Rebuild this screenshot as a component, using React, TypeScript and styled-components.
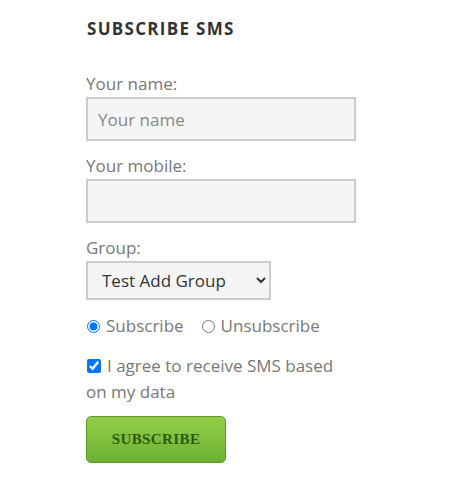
import styled, { createGlobalStyle } from "styled-components"

const GlobalStyle = createGlobalStyle`
  body {
    margin: 0;
    background: #ffffff;
    font-family: "Open Sans", "Liberation Sans", sans-serif;
  }
`

const Widget = styled.form`
  width: 450px;
  box-sizing: border-box;
  padding: 17px 0 0 86px;
  display: flex;
  flex-direction: column;
  align-items: flex-start;
`

const Title = styled.h3`
  margin: 0 0 30px 1px;
  font-family: "Open Sans", "Liberation Sans", sans-serif;
  font-weight: 700;
  font-size: 17px;
  line-height: 24px;
  letter-spacing: 1.3px;
  color: #333333;
`

const Label = styled.label<{ $gap?: number }>`
  display: block;
  margin-top: ${({ $gap }) => $gap ?? 0}px;
  font-size: 17px;
  line-height: 26px;
  color: #777777;
`

const TextInput = styled.input`
  width: 270px;
  height: 44px;
  box-sizing: border-box;
  border: 2px solid #cccccc;
  background: #f5f5f5;
  padding: 0 10px;
  font-family: inherit;
  font-size: 17px;
  color: #555555;
  outline: none;

  &::placeholder {
    color: #888888;
  }
`

const Select = styled.select`
  width: 185px;
  height: 39px;
  box-sizing: border-box;
  border: 2px solid #cccccc;
  background: #f5f5f5;
  padding: 0 8px 0 10px;
  font-family: inherit;
  font-size: 17px;
  color: #333333;
`

const RadioRow = styled.div`
  margin-top: 13px;
  display: flex;
  align-items: center;
  gap: 17px;
  font-size: 17px;
  line-height: 26px;
  color: #777777;
`

const Choice = styled.label`
  display: flex;
  align-items: center;
  gap: 6px;

  input {
    margin: 0 0 0 1px;
    width: 13px;
    height: 13px;
  }
`

const Agree = styled.label`
  display: block;
  width: 270px;
  margin-top: 14px;
  font-size: 17px;
  line-height: 26px;
  color: #777777;

  input {
    margin: 0 6px 0 1px;
    width: 14px;
    height: 14px;
    vertical-align: -1px;
  }
`

const SubmitButton = styled.button`
  margin-top: 11px;
  width: 140px;
  height: 47px;
  border: 1px solid #5c9a2c;
  border-radius: 5px;
  background: linear-gradient(to bottom, #93cd48, #6cb133);
  font-family: "Liberation Serif", "Times New Roman", serif;
  font-weight: 700;
  font-size: 15px;
  letter-spacing: 0.4px;
  color: #2e5a13;
  cursor: pointer;
`

export default function App() {
  return (
    <>
      <GlobalStyle />
      <Widget onSubmit={(e) => e.preventDefault()}>
        <Title>SUBSCRIBE SMS</Title>

        <Label htmlFor="sms-name">Your name:</Label>
        <TextInput id="sms-name" type="text" placeholder="Your name" />

        <Label htmlFor="sms-mobile" $gap={12}>Your mobile:</Label>
        <TextInput id="sms-mobile" type="tel" />

        <Label htmlFor="sms-group" $gap={12}>Group:</Label>
        <Select id="sms-group" defaultValue="test">
          <option value="test">Test Add Group</option>
        </Select>

        <RadioRow>
          <Choice>
            <input type="radio" name="sms-action" defaultChecked />
            Subscribe
          </Choice>
          <Choice>
            <input type="radio" name="sms-action" />
            Unsubscribe
          </Choice>
        </RadioRow>

        <Agree>
          <input type="checkbox" defaultChecked />
          I agree to receive SMS based on my data
        </Agree>

        <SubmitButton type="submit">SUBSCRIBE</SubmitButton>
      </Widget>
    </>
  )
}
